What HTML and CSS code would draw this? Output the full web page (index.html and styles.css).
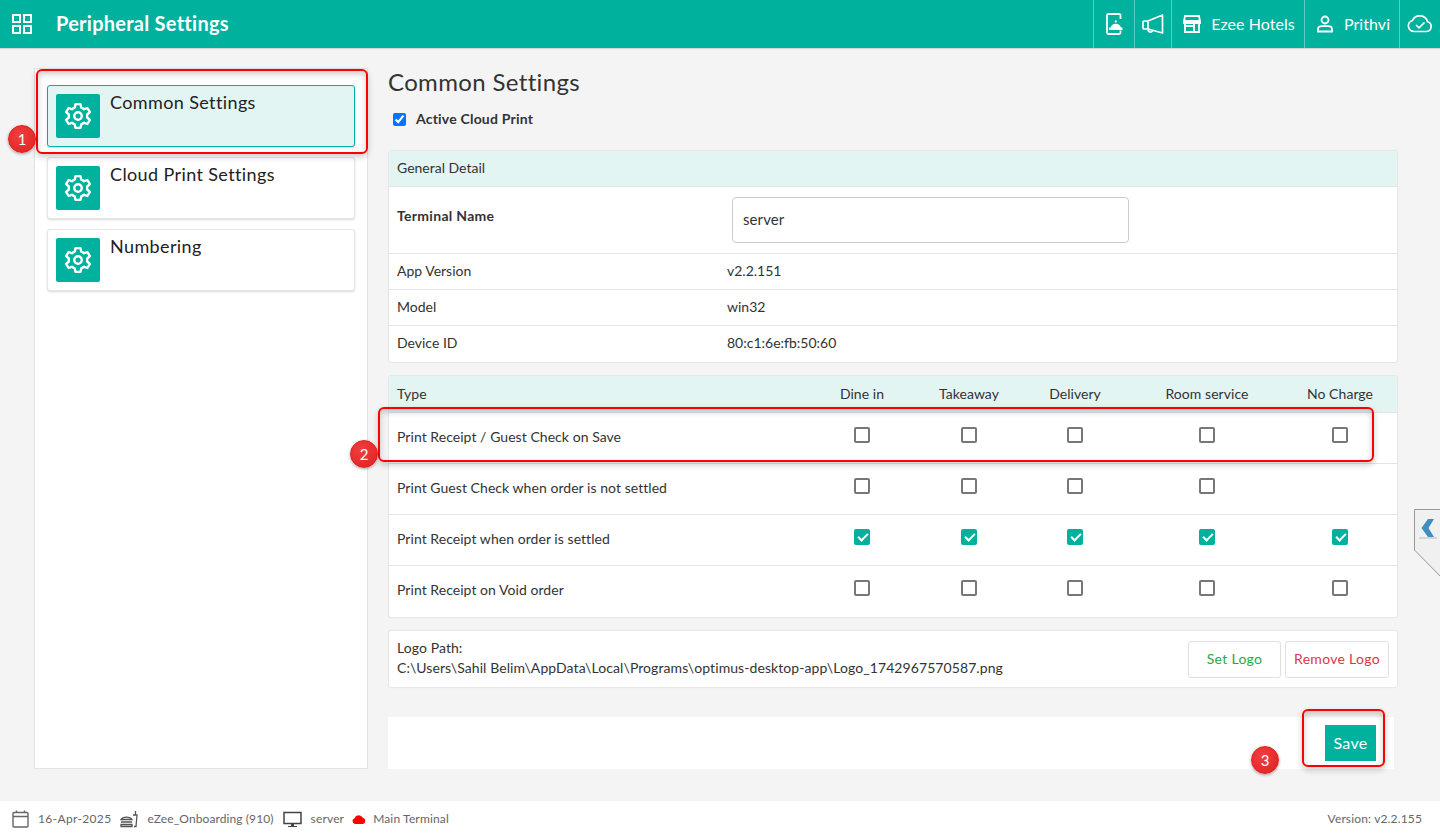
FILE: index.html
```html
<!DOCTYPE html>
<html lang="en">
<head>
<meta charset="utf-8">
<title>Peripheral Settings</title>
<link rel="stylesheet" href="styles.css">
</head>
<body>
<header class="topbar">
  <svg class="grid-icon" viewBox="0 0 20 20" width="20" height="20"><g fill="none" stroke="#fff" stroke-width="2"><rect x="1" y="1" width="7" height="7"/><rect x="12" y="1" width="7" height="7"/><rect x="1" y="12" width="7" height="7"/><rect x="12" y="12" width="7" height="7"/></g></svg>
  <h1 class="app-title">Peripheral Settings</h1>
  <nav class="top-nav">
    <div class="nav-item w-phone"><svg viewBox="0 0 18 22" width="18" height="22"><path d="M15.500 6V2.500Q15.500 1 14 1H3.500Q2 1 2 2.500V19.500Q2 21 3.500 21H14Q15.500 21 15.500 19.500V17.500" fill="none" stroke="#fff" stroke-width="1.800"/><path d="M5.500 14.500A5.500 5.500 0 0 1 16 14.500H17.500V17H4V14.500Z M9.800 7.500H11.700V9.500H9.800Z" fill="#fff"/></svg></div>
    <div class="nav-item w-mega"><svg viewBox="0 0 22 20" width="22" height="20"><path d="M20.500 1V19L6 15H2Q1 15 1 14V8Q1 7 2 7H6Z M6 7V15 M6 16A2.500 2.500 0 0 0 10.500 17" fill="none" stroke="#fff" stroke-width="1.700" stroke-linejoin="round"/></svg></div>
    <div class="nav-item w-hotel"><svg viewBox="0 0 18 18" width="18" height="18"><path d="M1 1H17M1 6H17M2 1L1 6V8H17V6L16 1M2 8V17H16V8M2 11H11V17M11 8V17" fill="none" stroke="#fff" stroke-width="1.800"/></svg><span>Ezee Hotels</span></div>
    <div class="nav-item w-user"><svg viewBox="0 0 18 18" width="18" height="18"><circle cx="9" cy="5" r="3.500" fill="none" stroke="#fff" stroke-width="1.800"/><path d="M2 16.500V14Q2 11.500 6 11.200H12Q16 11.500 16 14V16.500Z" fill="none" stroke="#fff" stroke-width="1.800"/></svg><span>Prithvi</span></div>
    <div class="nav-item w-cloud"><svg viewBox="0 0 26 18" width="26" height="18"><path d="M7 16.500H19.500A5 5 0 0 0 20.500 6.700A8 8 0 0 0 5.500 5.500A5.600 5.600 0 0 0 7 16.500Z" fill="none" stroke="#fff" stroke-width="1.700"/><path d="M9 10L12 12.800L17.500 7.500" fill="none" stroke="#fff" stroke-width="1.700"/></svg></div>
  </nav>
</header>

<main class="main">
  <aside class="sidebar">
    <a class="side-item active"><span class="side-icon"><svg viewBox="0 0 24 24" width="30" height="30"><use href="#gear"/></svg></span><span class="side-label">Common Settings</span></a>
    <a class="side-item"><span class="side-icon"><svg viewBox="0 0 24 24" width="30" height="30"><use href="#gear"/></svg></span><span class="side-label">Cloud Print Settings</span></a>
    <a class="side-item"><span class="side-icon"><svg viewBox="0 0 24 24" width="30" height="30"><use href="#gear"/></svg></span><span class="side-label">Numbering</span></a>
  </aside>

  <section class="content">
    <h2 class="page-title">Common Settings</h2>
    <label class="active-print"><input type="checkbox" checked><span>Active Cloud Print</span></label>

    <div class="card">
      <div class="card-head">General Detail</div>
      <div class="detail-row terminal"><b>Terminal Name</b><input class="text-input" type="text" value="server"></div>
      <div class="detail-row"><span>App Version</span><span>v2.2.151</span></div>
      <div class="detail-row"><span>Model</span><span>win32</span></div>
      <div class="detail-row"><span>Device ID</span><span>80:c1:6e:fb:50:60</span></div>
    </div>

    <div class="card">
      <div class="type-row type-head"><span class="t-label">Type</span><span>Dine in</span><span>Takeaway</span><span>Delivery</span><span>Room service</span><span>No Charge</span></div>
      <div class="type-row"><span class="t-label">Print Receipt / Guest Check on Save</span><i class="box"></i><i class="box"></i><i class="box"></i><i class="box"></i><i class="box"></i></div>
      <div class="type-row"><span class="t-label">Print Guest Check when order is not settled</span><i class="box"></i><i class="box"></i><i class="box"></i><i class="box"></i><span></span></div>
      <div class="type-row"><span class="t-label">Print Receipt when order is settled</span><i class="box on"></i><i class="box on"></i><i class="box on"></i><i class="box on"></i><i class="box on"></i></div>
      <div class="type-row"><span class="t-label">Print Receipt on Void order</span><i class="box"></i><i class="box"></i><i class="box"></i><i class="box"></i><i class="box"></i></div>
    </div>

    <div class="card logo-card">
      <div class="logo-path">Logo Path:<br>C:\Users\Sahil Belim\AppData\Local\Programs\optimus-desktop-app\Logo_1742967570587.png</div>
      <button class="btn-line set">Set Logo</button>
      <button class="btn-line remove">Remove Logo</button>
    </div>

    <div class="save-bar"><button class="btn-save">Save</button></div>
  </section>
</main>

<footer class="footer">
  <svg class="f-cal" viewBox="0 0 17 18" width="17" height="18"><path d="M1 3.500Q1 2.500 2 2.500H15Q16 2.500 16 3.500V16Q16 17 15 17H2Q1 17 1 16ZM1 6.500H16M4.500 0.500V3M12.500 0.500V3" fill="none" stroke="#666" stroke-width="1.400"/></svg>
  <span class="f-date">16-Apr-2025</span>
  <svg class="f-food" viewBox="0 0 19 18" width="19" height="18"><path d="M1 9.500A6 4 0 0 1 12 9.500Z M1 12H12 M1 14.500H12V16.500H1Z M14 16.500H16L17 5H13 M15.500 5V1" fill="none" stroke="#555" stroke-width="1.300"/></svg>
  <span class="f-org">eZee_Onboarding (910)</span>
  <svg class="f-mon" viewBox="0 0 19 17" width="19" height="17"><path d="M1 1.500H18V12.500H1Z" fill="none" stroke="#444" stroke-width="1.500"/><path d="M8 13H11V15H14V16H5V15H8Z" fill="#444"/></svg>
  <span class="f-server">server</span>
  <svg class="f-red" viewBox="0 0 14 10" width="14" height="10"><path d="M3 10A3 3 0 0 1 2.500 4.200A4.500 4.500 0 0 1 10.800 3.800A3.200 3.200 0 0 1 11 10Z" fill="#f00"/></svg>
  <span class="f-term">Main Terminal</span>
  <span class="f-version">Version: v2.2.155</span>
</footer>

<div class="side-tab"><svg viewBox="0 0 26 67" width="26" height="67"><path d="M0.500 0.500H26V67L0.500 41Z" fill="#f0f0f0"/><path d="M0.500 41V0.500H26M0.500 41L26 67" fill="none" stroke="#999"/><path d="M14 10H20L14.500 19L20 28H14L7.500 19Z" fill="#3d8fc0"/><path d="M5 28.500H23V29.500H5Z" fill="#bbb"/></svg></div>

<div class="mark mark-1"></div><div class="mark mark-2"></div><div class="mark mark-3"></div>
<span class="badge badge-1">1</span><span class="badge badge-2">2</span><span class="badge badge-3">3</span>

<svg class="defs" width="0" height="0"><defs><g id="gear" fill="none" stroke="#fff" stroke-width="1.900" stroke-linejoin="round"><circle cx="12" cy="12" r="3"/><path d="M10 2.500H14L14.600 5.300A7.500 7.500 0 0 1 16.800 6.600L19.500 5.600L21.500 8.900L19.300 10.800A7.500 7.500 0 0 1 19.300 13.200L21.500 15.100L19.500 18.400L16.800 17.400A7.500 7.500 0 0 1 14.600 18.700L14 21.500H10L9.400 18.700A7.500 7.500 0 0 1 7.200 17.400L4.500 18.400L2.500 15.100L4.700 13.200A7.500 7.500 0 0 1 4.700 10.800L2.500 8.900L4.500 5.600L7.200 6.600A7.500 7.500 0 0 1 9.400 5.300Z"/></g></defs></svg>
</body>
</html>
```
FILE: styles.css
```css
* { box-sizing: border-box; }
html, body { margin: 0; height: 837px; overflow: hidden; }
body {
  background: #f4f4f4;
  color: #333;
  font-family: "Lato", "Noto Sans", sans-serif;
  font-size: 14px;
  letter-spacing: .05px;
  display: flex;
  flex-direction: column;
  position: relative;
}
.topbar {
  height: 48px;
  flex: none;
  background: #00b19d;
  color: #fff;
  display: flex;
  align-items: center;
  padding-left: 12px;
  box-shadow: 0 1px 1px rgba(0,0,0,.12);
}
.grid-icon { display: block; }
.app-title { margin: 0 0 2px 24px; font-size: 20px; font-weight: 700; letter-spacing: .26px; }
.top-nav { margin-left: auto; display: flex; height: 48px; }
.nav-item {
  display: flex;
  align-items: center;
  justify-content: center;
  gap: 10px;
  border-left: 1px solid rgba(255,255,255,.35);
  font-size: 16px;
}
.nav-item span { margin-bottom: 2px; }
.w-phone { width: 41px; }
.w-mega { width: 37px; }
.w-hotel { width: 133px; padding-left: 2px; }
.w-user { width: 95px; padding-left: 2px; }
.w-cloud { width: 41px; }

.main { flex: 1; display: flex; gap: 20px; padding: 20px 42px 32px 34px; min-height: 0; }
.sidebar {
  width: 334px;
  flex: none;
  background: #fff;
  border: 1px solid #e2e2e2;
  padding: 16px 12px;
  display: flex;
  flex-direction: column;
  gap: 10px;
}
.side-item {
  height: 62px;
  display: flex;
  gap: 10px;
  padding: 8px;
  background: #fff;
  border: 1px solid #e6e6e6;
  border-radius: 3px;
  box-shadow: 0 1px 2px rgba(0,0,0,.15);
}
.side-item.active { background: #e3f5f3; border-color: #00b19d; }
.side-icon {
  width: 44px; height: 44px;
  background: #00b19d;
  border-radius: 2px;
  display: flex; align-items: center; justify-content: center;
  flex: none;
}
.side-label { font-size: 18px; line-height: 16px; letter-spacing: .38px; color: #222; }

.content { flex: 1; min-width: 0; display: flex; flex-direction: column; }
.page-title { margin: 0 0 2px; font-size: 24px; font-weight: 400; line-height: 28px; letter-spacing: .35px; color: #333; }
.active-print {
  display: flex; align-items: center; gap: 10px;
  height: 22px; margin: 10px 0 21px 5px;
  font-weight: 700; font-size: 14px; letter-spacing: .2px;
}
.active-print span { margin-bottom: 2px; }
.active-print input { margin: 0; width: 13px; height: 13px; accent-color: #0075ff; }

.card {
  background: #fff;
  margin: 0 1px 14px;
  box-shadow: 0 0 2px rgba(0,0,0,.2);
  border-radius: 2px;
}
.card-head {
  height: 36px;
  background: #e3f5f3;
  display: flex; align-items: center;
  padding: 0 0 2px 8px;
  font-size: 14px;
  letter-spacing: 0;
  border-bottom: 1px solid #e4e4e4;
}
.detail-row {
  height: 36px;
  display: grid;
  grid-template-columns: 330px 1fr;
  align-items: center;
  padding: 0 0 2px 8px;
  letter-spacing: 0;
  border-bottom: 1px solid #e4e4e4;
}
.detail-row:last-child { border-bottom: 0; padding-bottom: 3px; }
.detail-row.terminal { height: 67px; align-items: start; padding-top: 20px; }
.terminal b { letter-spacing: .3px; }
.text-input {
  margin: -10px 0 0 5px;
  width: 397px; height: 46px;
  border: 1px solid #ccc;
  border-radius: 4px;
  padding: 0 10px 2px;
  font: 15px "Lato", sans-serif;
  letter-spacing: .1px;
  color: #333;
}
.type-row {
  height: 51px;
  display: grid;
  grid-template-columns: 420px 106px 108px 104px 160px 106px;
  justify-items: center;
  align-items: start;
  padding-top: 14px;
  border-bottom: 1px solid #e4e4e4;
}
.type-row:last-child { border-bottom: 0; }
.type-head {
  height: 37px;
  background: #e3f5f3;
  padding-top: 9px;
  font-size: 14px;
}
.t-label { justify-self: start; padding-left: 8px; margin-top: 1px; font-size: 14px; }
.type-head .t-label { margin-top: 0; }
.box {
  display: block;
  width: 16px; height: 16px;
  border: 2px solid #777;
  border-radius: 2px;
  position: relative;
}
.box.on { background: #00b19d; border-color: #00b19d; }
.box.on::after {
  content: "";
  position: absolute;
  left: 2px; top: 2px;
  width: 8px; height: 4px;
  border-left: 2px solid #fff;
  border-bottom: 2px solid #fff;
  transform: rotate(-45deg);
}
.logo-card {
  height: 56px;
  display: flex;
  align-items: center;
  gap: 4px;
  padding: 0 8px;
  margin-bottom: 30px;
}
.logo-path { flex: 1; font-size: 14px; line-height: 20px; padding-bottom: 2px; letter-spacing: .08px; }
.btn-line {
  height: 37px;
  background: #fff;
  border: 1px solid #e0e0e0;
  border-radius: 3px;
  padding-bottom: 2px;
  font: 14px "Lato", sans-serif;
  letter-spacing: .3px;
}
.set { width: 93px; color: #28a745; }
.remove { width: 104px; color: #dc3545; }
.save-bar {
  height: 52px;
  margin-right: 4px;
  background: #fff;
  display: flex;
  justify-content: flex-end;
  padding: 8px 18px;
}
.btn-save {
  width: 51px; height: 36px;
  background: #00b19d;
  color: #fff;
  border: 0;
  padding: 0 0 2px;
  font: 16px "Lato", sans-serif;
  letter-spacing: .3px;
}
.footer {
  height: 36px;
  flex: none;
  background: #fff;
  display: flex;
  align-items: center;
  padding: 0 18px 0 12px;
  font-size: 12px;
  letter-spacing: .15px;
  color: #666;
}
.footer span { margin-bottom: 2px; }
.f-date { margin-left: 9px; letter-spacing: .35px; }
.f-food { margin-left: 9px; }
.f-org { margin-left: 8px; letter-spacing: .1px; }
.f-mon { margin-left: 9px; }
.f-server { margin-left: 9px; }
.f-red { margin-left: 8px; }
.f-term { margin-left: 7px; }
.f-version { margin-left: auto; }

.side-tab { position: absolute; left: 1414px; top: 509px; width: 26px; height: 67px; }
.side-tab svg { display: block; }
.mark {
  position: absolute;
  border: 2px solid #f00;
  border-radius: 6px;
  box-shadow: 0 3px 6px rgba(0,0,0,.2), inset 0 3px 6px rgba(0,0,0,.2);
  pointer-events: none;
}
.mark-1 { left: 36px; top: 69px; width: 332px; height: 85px; }
.mark-2 { left: 378px; top: 407px; width: 996px; height: 55px; }
.mark-3 { left: 1302px; top: 709px; width: 83px; height: 58px; }
.badge {
  position: absolute;
  width: 28px; height: 28px;
  border-radius: 50%;
  background: radial-gradient(circle at 40% 35%, #ee4040, #e02020);
  border: 1px solid #e41c1c;
  box-shadow: 0 1px 3px rgba(0,0,0,.35);
  color: #fff;
  font-size: 15px;
  text-align: center;
  line-height: 26px;
}
.badge-1 { left: 8px; top: 125px; }
.badge-2 { left: 350px; top: 440px; }
.badge-3 { left: 1251px; top: 746px; }
.defs { position: absolute; }
```
